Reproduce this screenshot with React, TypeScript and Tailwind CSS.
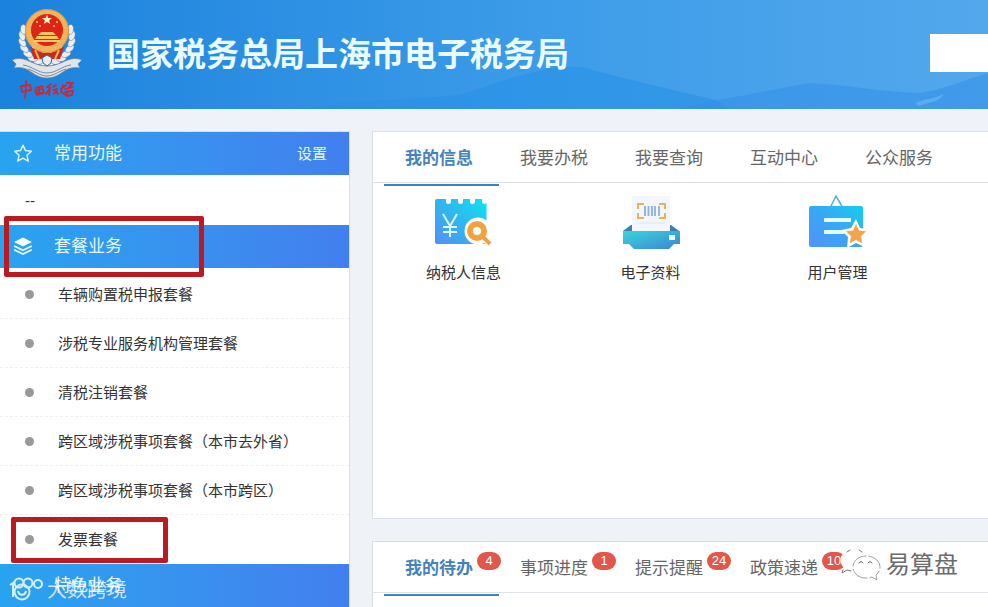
import type { ReactNode } from "react";

const FONT = "font-['Liberation_Sans','Noto_Sans_CJK_SC',sans-serif]";

function Emblem() {
  const leaves = [0, 1, 2, 3, 4, 5, 6, 7];
  return (
    <svg viewBox="0 0 72 72" className="h-[72px] w-[72px]" aria-label="国徽">
      <g fill="#e9eef2" stroke="#5f7f9e" strokeWidth=".5">
        {leaves.map((i) => {
          const r = 95 + i * 15;
          const a = (r * Math.PI) / 180;
          const x = 36 + Math.cos(a) * 25;
          const y = 30 + Math.sin(a) * 25;
          return (
            <g key={i}>
              <ellipse cx={x} cy={y} rx="3" ry="5" transform={`rotate(${r - 25} ${x} ${y})`} />
              <ellipse cx={72 - x} cy={y} rx="3" ry="5" transform={`rotate(${25 - r} ${72 - x} ${y})`} />
            </g>
          );
        })}
      </g>
      <path d="M1 52c7-3 12-1 17 1 6 3 12 5 18 5s12-2 18-5c5-2 10-4 17-1l-4 4 2 4c-7-1-12 0-17 4-6 4-10 6-16 6s-10-2-16-6c-5-4-10-5-17-4l2-4z" fill="#dfe5ea" stroke="#6f7f90" strokeWidth=".8" />
      <path d="M12 57c9 1 15 8 24 8s15-7 24-8M17 61c7 2 12 7 19 7s12-5 19-7" fill="none" stroke="#7d8b99" strokeWidth="1" />
      <path d="M19 39h34l-4 12H23z" fill="#c9281f" />
      <path d="M24 42l4 9M48 42l-4 9M31 44h10" stroke="#f0b04a" strokeWidth="2" />
      <path d="M31 50l5-3 5 3-1 5-4 3-4-3z" fill="#e8edf4" stroke="#2b66a8" strokeWidth="1" />
      <circle cx="36" cy="23" r="22" fill="#efb45c" />
      <circle cx="36" cy="23" r="21.500" fill="none" stroke="#d98b37" strokeWidth=".8" />
      <circle cx="36" cy="22" r="16" fill="#dd2417" />
      <path d="M36 6.500l1.300 3.600h3.800l-3 2.300 1.100 3.700-3.200-2.200-3.200 2.200 1.100-3.700-3-2.300h3.800z" fill="#fff0c0" />
      <g fill="#f8c45e">
        <circle cx="26" cy="14" r="1.100" />
        <circle cx="29" cy="18" r="1.100" />
        <circle cx="43" cy="18" r="1.100" />
        <circle cx="46" cy="14" r="1.100" />
        <path d="M30 24h12l3 3H27zM26 28h20l2 3H24zM23 32h26v2H23z" />
      </g>
      <path d="M21 36c10 3 20 3 30 0v4c-10 3-20 3-30 0z" fill="#efb45c" />
      <path d="M29 42a7 4 0 0 1 14 0z" fill="#efb45c" />
    </svg>
  );
}

function EmblemScript() {
  return (
    <svg viewBox="0 0 56 22" className="h-[22px] w-[56px]" fill="none" stroke="#c22b3f" strokeWidth="1.800" strokeLinecap="round" strokeLinejoin="round" aria-label="中国税务">
      <path d="M2 6l1 6c3-1 6-2 9-2l-1-5-9 1M7 1c0 6 0 12-1 17" />
      <path d="M17 8l6-2 2 7-7 2-2-5M18 10l4-1M20 7v6M18 13h5" />
      <path d="M32 4l-4 3 3 1-4 6M31 8l-1 7M34 7l3-2M34 10l4-1-3 5M37 11l2 3" />
      <path d="M44 5l-2 7 5 3M47 5l-5 4M46 9l8-2M48 3l6 0-4 4M46 12l8-1-1 4-5 1 1-5" />
    </svg>
  );
}

function Hills() {
  return (
    <svg viewBox="0 0 988 109" preserveAspectRatio="none" className="absolute inset-0 h-full w-full" aria-hidden="true">
      <path d="M300 109C350 99 400 101 450 96C480 91 492 83 515 77C545 69 558 65 582 67C620 78 650 84 715 100L730 109Z" fill="#2490e6" opacity=".55" />
      <path d="M715 100C750 95 780 88 810 83C850 85 880 92 920 93C945 89 965 80 988 73V109H680Z" fill="#338fe8" opacity=".55" />
      <path d="M915 104C925 97 935 100 943 94C940 103 927 102 920 106Z" fill="#8cc5f5" opacity=".4" />
    </svg>
  );
}

function StarIcon() {
  return (
    <svg viewBox="0 0 20 20" className="h-5 w-5" fill="none" stroke="#d9f5ff" strokeWidth="1.500" strokeLinejoin="round" aria-hidden="true">
      <path d="M10 1.200l2.500 5.400 5.800.7-4.300 4 1.200 5.900-5.200-3-5.200 3L6 11.300l-4.300-4 5.800-.7z" />
    </svg>
  );
}

function LayersIcon() {
  return (
    <svg viewBox="0 0 20 20" className="h-5 w-5" aria-hidden="true">
      <path d="M10 .5l9 4.500-9 4.500L1 5z" fill="#fff" />
      <path d="M1.200 9L10 13.200 18.800 9M1.200 12.800L10 17l8.800-4.200" fill="none" stroke="#e8f8ff" strokeWidth="1.800" />
    </svg>
  );
}

function CirclesIcon() {
  return (
    <svg viewBox="0 0 34 26" className="h-[26px] w-[34px]" fill="none" stroke="#d6efff" strokeWidth="2" aria-hidden="true">
      <circle cx="10" cy="6" r="4.500" />
      <circle cx="19" cy="6" r="4.500" />
      <circle cx="29" cy="7" r="4" />
      <path d="M1 8l3-2v14" />
      <circle cx="13" cy="15" r="7.500" />
      <path d="M9 14c1 5 7 5 8 0" />
    </svg>
  );
}

function TaxpayerIcon() {
  return (
    <svg viewBox="3 0 60 56" className="h-14 w-[60px]" aria-hidden="true">
      <defs>
        <linearGradient id="taxpayer" x1="1" y1="0" x2="0" y2="1">
          <stop offset="0" stopColor="#08e5f1" />
          <stop offset=".5" stopColor="#32b5ef" />
          <stop offset="1" stopColor="#5290f5" />
        </linearGradient>
      </defs>
      <path d="M4 6q0-2 2-2h9v3q0 2 2.500 2t2.500-2V4h7v3q0 2 2.500 2t2.500-2V4h7v3q0 2 2.500 2t2.500-2V4h7v3q0 2 2.500 2l2-1v39q0 2-2 2H6q-2 0-2-2z" fill="url(#taxpayer)" />
      <path d="M12 19l7 12 7-12M19 31v11M12 32h14M12 37h14" fill="none" stroke="#d9faff" strokeWidth="2" />
      <circle cx="47" cy="36" r="13.500" fill="#fff" />
      <path d="M51 40l9 9" stroke="#fff" strokeWidth="8" />
      <circle cx="46" cy="36" r="7" fill="none" stroke="#f3a240" strokeWidth="6" />
      <path d="M52 42l7 7" stroke="#f0a04a" strokeWidth="4" />
    </svg>
  );
}

function PrinterIcon() {
  return (
    <svg viewBox="0 0 60 56" className="h-14 w-[60px]" aria-hidden="true">
      <defs>
        <linearGradient id="printer" x1="0" y1="0" x2="1" y2="1">
          <stop offset="0" stopColor="#39d6d9" />
          <stop offset="1" stopColor="#3b85d6" />
        </linearGradient>
      </defs>
      <path d="M2 36l8-6h40l8 6-3 5H6z" fill="#3a7fae" />
      <path d="M11 1h38v35H11z" fill="#f3f7fc" />
      <path d="M17 14V9h6M38 9h6v5M17 18v5h6M38 23h6v-5" fill="none" stroke="#eab05e" strokeWidth="2" />
      <path d="M24 11v10M27.500 11v10M31 11v10M34 11v10M38 11v10" stroke="#8db0e2" strokeWidth="1.800" />
      <path d="M18 28h26" stroke="#dbe6f2" />
      <path d="M2 36h57v13h-6l-5 5H13l-5-5H2z" fill="url(#printer)" />
      <rect x="48" y="40" width="6" height="5" fill="#eafdff" />
    </svg>
  );
}

function UserBoardIcon() {
  return (
    <svg viewBox="1 -1 60 56" className="h-14 w-[60px]" aria-hidden="true">
      <defs>
        <linearGradient id="board" x1="1" y1="0" x2="0" y2="1">
          <stop offset="0" stopColor="#12cfee" />
          <stop offset=".5" stopColor="#3aa6f4" />
          <stop offset="1" stopColor="#5093fa" />
        </linearGradient>
      </defs>
      <path d="M23 12l6-12 7 12" fill="none" stroke="#52b4cf" strokeWidth="1.500" />
      <rect x="2" y="10" width="54" height="41" rx="2" fill="url(#board)" />
      <path d="M17 24h27M17 36h20" stroke="#e3fbff" strokeWidth="4" />
      <path d="M49 23l4 9 10 1-6 8 1 10-9-4-9 5 1-11-7-7 10-2z" fill="#fff" />
      <path d="M49 28l3 6.500 7 .8-5 5 1.200 7-6.200-3.300-6.200 3.300 1.200-7-5-5 7-.8z" fill="#f2a54a" />
    </svg>
  );
}

function ChatLogo() {
  return (
    <svg viewBox="0 0 42 34" className="h-[34px] w-[42px]" fill="#fff" stroke="#a0a0a0" strokeWidth="1" strokeLinecap="round" aria-hidden="true">
      <path d="M15 1C7 1 1 6 1 12c0 4 2 7 5 9l-2 5 6-3c12 3 20-3 20-11C30 6 24 1 15 1z" stroke="#fff" />
      <path d="M26 8c-8 0-13 5-13 11s5 11 13 11c2 0 4 0 6-1l5 3-1-5c2-2 4-4 4-8 0-6-6-11-14-11z" strokeDasharray="18 3" />
      <path d="M3 22l-1 3 5-3 4 1M7 4l3-2M19 2l3 2" fill="none" stroke="#777" />
      <path d="M19 15q2-3 4 0M28 15q2-3 4 0" fill="none" stroke="#666" />
    </svg>
  );
}

function SidebarHeading({ icon, title, action }: { icon: ReactNode; title: string; action?: string }) {
  return (
    <div className="flex h-[43px] items-center bg-linear-to-r from-[#28a4ef] to-[#427fee] pr-[22px] pl-[13px] text-[#e4f8ff]">
      <span className="flex w-[41px] shrink-0">{icon}</span>
      <h2 className="text-[17px] leading-6">{title}</h2>
      {action && (
        <button type="button" className="ml-auto text-[15px] leading-6">
          {action}
        </button>
      )}
    </div>
  );
}

type Tab = { label: string; count?: number };

function Tabs({ items, label }: { items: Tab[]; label: string }) {
  return (
    <div role="tablist" aria-label={label} className="flex h-[51px] border-b border-[#dfe4e9] pl-[11px]">
      {items.map((tab, i) => (
        <button
          key={tab.label}
          type="button"
          role="tab"
          aria-selected={i === 0}
          className={
            i === 0
              ? "relative h-[54px] w-[115px] shrink-0 border-b-2 border-[#4283b8] pt-[2px] pl-[21px] text-left text-[17px] leading-6 font-bold text-[#4383bb]"
              : "relative h-[54px] w-[115px] shrink-0 border-b-2 border-transparent pt-[2px] pl-[21px] text-left text-[17px] leading-6 text-[#666]"
          }
        >
          {tab.label}
          {tab.count !== undefined && (
            <span className="absolute top-[10px] left-[93px] h-[18px] w-6 rounded-full bg-[#e2574c] text-center text-[13px] leading-[18px] font-normal text-white">
              {tab.count}
            </span>
          )}
        </button>
      ))}
    </div>
  );
}

const packages = [
  "车辆购置税申报套餐",
  "涉税专业服务机构管理套餐",
  "清税注销套餐",
  "跨区域涉税事项套餐（本市去外省）",
  "跨区域涉税事项套餐（本市跨区）",
  "发票套餐",
];

const infoTabs: Tab[] = [
  { label: "我的信息" },
  { label: "我要办税" },
  { label: "我要查询" },
  { label: "互动中心" },
  { label: "公众服务" },
];

const todoTabs: Tab[] = [
  { label: "我的待办", count: 4 },
  { label: "事项进度", count: 1 },
  { label: "提示提醒", count: 24 },
  { label: "政策速递", count: 10 },
];

const shortcuts = [
  { label: "纳税人信息", icon: <TaxpayerIcon /> },
  { label: "电子资料", icon: <PrinterIcon /> },
  { label: "用户管理", icon: <UserBoardIcon /> },
];

export default function App() {
  return (
    <div className={`relative h-screen overflow-hidden bg-[#eff2f7] ${FONT}`}>
      <header className="relative flex h-[109px] items-center bg-linear-to-r from-[#1a82dc] via-[#3c9ce9] via-55% to-[#53a8ec]">
        <Hills />
        <div className="relative ml-[11px] flex w-[72px] flex-col items-center">
          <Emblem />
          <EmblemScript />
        </div>
        <h1 className="relative ml-6 text-[33px] leading-10 font-bold whitespace-nowrap text-[#e9fbff]">
          国家税务总局上海市电子税务局
        </h1>
        <input aria-label="搜索" className="relative mb-1 ml-auto h-[38px] w-[58px] bg-white px-2 outline-none" />
      </header>

      <div className="flex gap-[22px] pt-[22px]">
        <aside className="w-[350px] shrink-0 border-t border-r border-[#d9dfe6] bg-white">
          <SidebarHeading icon={<StarIcon />} title="常用功能" action="设置" />
          <p className="h-[50px] pt-[14px] pl-[25px] text-[15px] leading-6 text-[#333]">--</p>
          <div className="relative">
            <SidebarHeading icon={<LayersIcon />} title="套餐业务" />
            <span className="absolute top-[-9px] left-1 h-[61px] w-[200px] rounded-xs border-5 border-[#bb1a20]" />
          </div>
          <ul className="pt-[2px]">
            {packages.map((name, i) => (
              <li key={name} className="relative flex h-[49px] items-center border-b border-dashed border-[#f0f0f0] pl-[25px] last:border-transparent">
                <span className="h-[9px] w-[9px] rounded-full bg-[#999]" />
                <a href="#" className="ml-6 pt-[2px] text-[15px] leading-6 whitespace-nowrap text-[#333]">
                  {name}
                </a>
                {i === packages.length - 1 && (
                  <span className="absolute top-[2px] left-[11px] h-[46px] w-[157px] rounded-xs border-5 border-[#bb1a20]" />
                )}
              </li>
            ))}
          </ul>
          <SidebarHeading icon={null} title="特色业务" />
        </aside>

        <main className="flex min-w-0 flex-1 flex-col gap-[22px]">
          <section className="h-[388px] border border-r-0 border-[#d9dfe6] bg-white">
            <Tabs items={infoTabs} label="信息" />
            <div className="flex gap-20 pt-3 pl-[37px]">
              {shortcuts.map((item) => (
                <a key={item.label} href="#" className="flex w-[107px] flex-col items-center text-[15px] leading-6 text-[#333]">
                  {item.icon}
                  <span className="mt-[10px]">{item.label}</span>
                </a>
              ))}
            </div>
          </section>
          <section className="h-[120px] border border-r-0 border-[#d9dfe6] bg-white">
            <Tabs items={todoTabs} label="待办" />
          </section>
        </main>
      </div>

      <div className="absolute bottom-1 left-[9px] flex items-center gap-1 text-[20px] leading-6 text-white/75">
        <CirclesIcon />
        <span>大数跨境</span>
      </div>
      <div className="absolute right-[30px] bottom-[25px] flex items-center gap-1 text-[24px] leading-8 text-[#6b6b6b]">
        <ChatLogo />
        <span>易算盘</span>
      </div>
    </div>
  );
}
